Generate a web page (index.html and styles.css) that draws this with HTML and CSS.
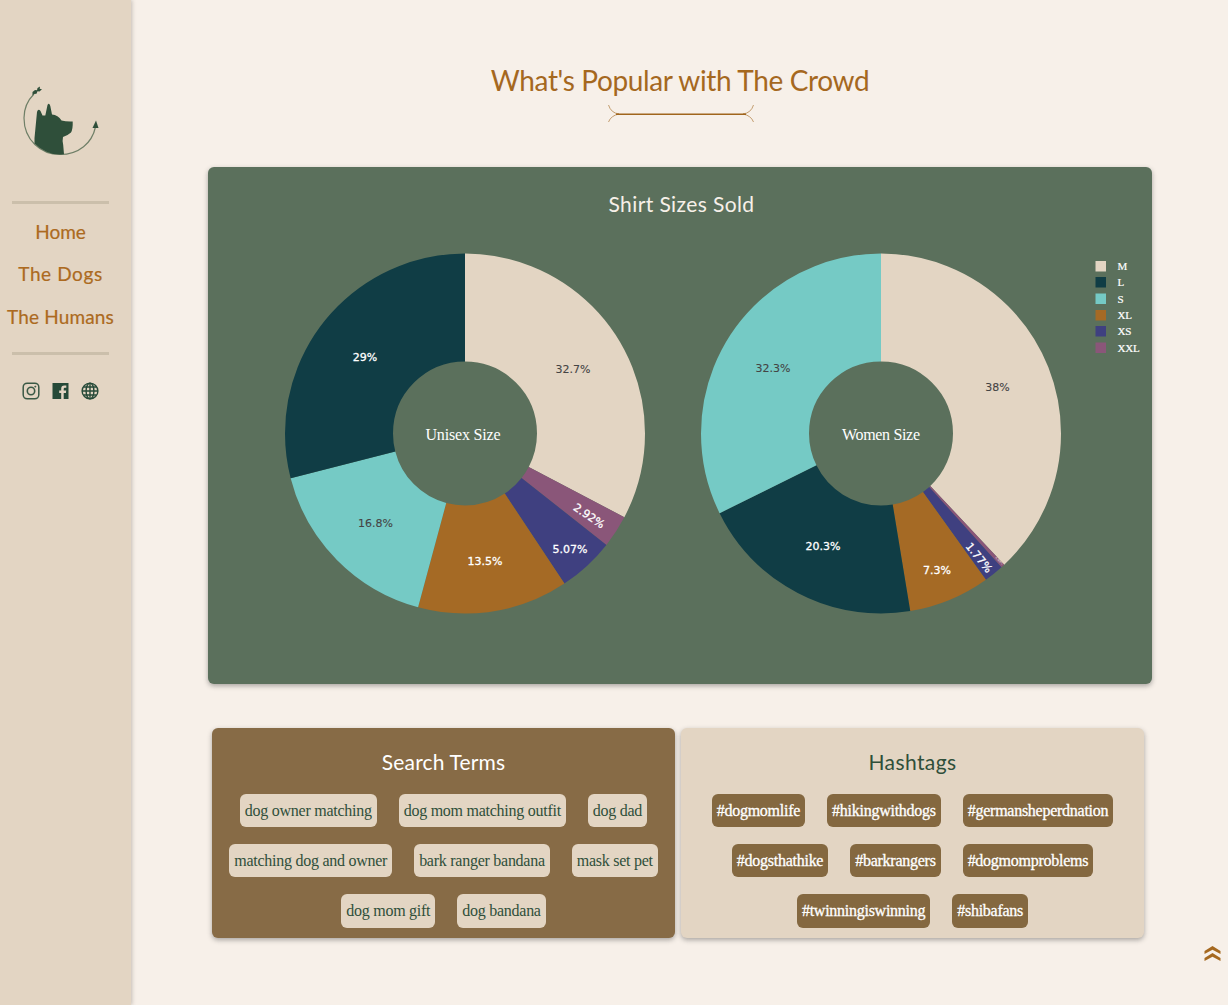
FILE: index.html
```html
<!DOCTYPE html>
<html lang="en">
<head>
<meta charset="utf-8">
<title>What's Popular with The Crowd</title>
<link rel="stylesheet" href="styles.css">
</head>
<body>
<aside class="sidebar">
  <svg class="logo" width="84" height="80" viewBox="18 80 84 80" role="img" aria-label="Dog logo">
    <path d="M34 94C27 101 24 109 24 118C24 140 41 154.500 60 154.500C79 154.500 92 143 95.500 127" fill="none" stroke="#6f7f67" stroke-width="1.200"/>
    <path d="M34.500 143.500V138L37 112Q38.200 108 40.500 111L42.500 115.500H45.300L47.500 105Q49 102 50.300 106L52 114.500Q58 115 61.500 120.500Q66 121.800 72.700 121.500Q73 129 71 132.500Q67 136 63 137Q62.200 140 63.200 145L64 154.300Q54 155.500 46 151.500Q39.500 148.500 34.500 143.500Z" fill="#2f4f3a"/>
    <path d="M96 120.500L98.500 128H92.500Z" fill="#2f4f3a"/>
    <path d="M32.500 95.500L32.500 92L35 90L37 90.300L37.500 88L40 86.500L39.700 88.800L42 89.200L39.500 91.500L37.500 91.300L36.500 93.800L34 94Z" fill="#2f4f3a"/>
  </svg>
  <nav class="nav">
    <a class="nav-link nav-home">Home</a>
    <a class="nav-link nav-dogs">The Dogs</a>
    <a class="nav-link nav-humans">The Humans</a>
  </nav>
  <div class="socials">
    <svg width="18" height="18" viewBox="0 0 18 18" fill="none" stroke="#3a5945"><rect x="1.200" y="1.200" width="15.600" height="15.600" rx="4" stroke-width="1.500"/><circle cx="9" cy="9" r="3.700" stroke-width="1.600"/><circle cx="13.300" cy="4.600" r=".7" fill="#2f4f3a" stroke-width=".5"/></svg>
    <svg width="18" height="18" viewBox="0 0 18 18"><path fill="#264a38" d="M.5 1H16.500V17H11.700V11H13.900L14.200 8.500H11.700V6.900Q11.700 5.700 12.800 5.700H14.300V3.400H12.300Q9.200 3.400 9.200 6.700V8.500H7.200V11H9.200V17H.5Z"/></svg>
    <svg width="18" height="18" viewBox="0 0 18 18" fill="none" stroke="#264a38" stroke-width="1.400"><circle cx="9" cy="9" r="7.900"/><ellipse cx="9" cy="9" rx="3.900" ry="7.900"/><path d="M9 1V17M1 9H17M2.500 5H15.500M2.500 13H15.500"/></svg>
  </div>
</aside>
<main class="main">
  <header class="page-head">
    <h1 class="page-title">What's Popular with The Crowd</h1>
    <svg class="flourish" width="148" height="20" viewBox="0 0 148 20" fill="none" stroke="#a0651d"><path d="M9 10.200H139" stroke-width="1.500"/><path d="M1.500 1Q4 9 12 10Q4 11.500 1.500 18M146.500 1Q144 9 136 10Q144 11.500 146.500 18" stroke-width=".6"/></svg>
  </header>
  <section class="card chart-card">
    <h2 class="card-title chart-title">Shirt Sizes Sold</h2>
    <svg class="chart" width="944" height="400" viewBox="208 234 944 400">
      <g class="ring" transform="rotate(-90 465 433.500)">
        <circle class="c-m" cx="465" cy="433.500" r="126" pathLength="100" stroke-dasharray="32.700 67.300"/>
        <circle class="c-xxl" cx="465" cy="433.500" r="126" pathLength="100" stroke-dasharray="2.920 97.080" stroke-dashoffset="-32.700"/>
        <circle class="c-xs" cx="465" cy="433.500" r="126" pathLength="100" stroke-dasharray="5.070 94.930" stroke-dashoffset="-35.620"/>
        <circle class="c-xl" cx="465" cy="433.500" r="126" pathLength="100" stroke-dasharray="13.510 86.490" stroke-dashoffset="-40.690"/>
        <circle class="c-s" cx="465" cy="433.500" r="126" pathLength="100" stroke-dasharray="16.800 83.200" stroke-dashoffset="-54.200"/>
        <circle class="c-l" cx="465" cy="433.500" r="126" pathLength="100" stroke-dasharray="29 71" stroke-dashoffset="-71"/>
      </g>
      <g class="ring" transform="rotate(-90 881 433.500)">
        <circle class="c-m" cx="881" cy="433.500" r="126" pathLength="100" stroke-dasharray="38 62"/>
        <circle class="c-xxl" cx="881" cy="433.500" r="126" pathLength="100" stroke-dasharray=".33 99.670" stroke-dashoffset="-38"/>
        <circle class="c-xs" cx="881" cy="433.500" r="126" pathLength="100" stroke-dasharray="1.770 98.230" stroke-dashoffset="-38.330"/>
        <circle class="c-xl" cx="881" cy="433.500" r="126" pathLength="100" stroke-dasharray="7.300 92.700" stroke-dashoffset="-40.100"/>
        <circle class="c-l" cx="881" cy="433.500" r="126" pathLength="100" stroke-dasharray="20.300 79.700" stroke-dashoffset="-47.400"/>
        <circle class="c-s" cx="881" cy="433.500" r="126" pathLength="100" stroke-dasharray="32.300 67.700" stroke-dashoffset="-67.700"/>
      </g>
      <g class="pct">
        <text class="dark" x="573" y="373">32.7%</text>
        <text class="dark" x="375.500" y="527">16.8%</text>
        <text class="dark" x="773" y="372">32.3%</text>
        <text class="dark" x="997.500" y="391">38%</text>
        <text x="365" y="360.500">29%</text>
        <text x="485" y="564.500">13.5%</text>
        <text x="570" y="553">5.07%</text>
        <text transform="translate(587 519) rotate(34)">2.92%</text>
        <text x="823" y="550">20.3%</text>
        <text x="937" y="573.500">7.3%</text>
        <text transform="translate(976 560) rotate(51)">1.77%</text>
        <text class="tiny" transform="translate(998.500 561.200) rotate(47)">0.328%</text>
      </g>
      <g class="center-label">
        <text x="463" y="439.500" textLength="75">Unisex Size</text>
        <text x="881" y="439.500" textLength="78">Women Size</text>
      </g>
      <g class="legend">
        <path fill="#e3d5c3" d="M1095.500 261h10.500v10.500h-10.500z"/><text x="1117.500" y="270">M</text>
        <path fill="#103d45" d="M1095.500 277h10.500v10.500h-10.500z"/><text x="1117.500" y="286">L</text>
        <path fill="#75cac5" d="M1095.500 293.500h10.500v10.500h-10.500z"/><text x="1117.500" y="303">S</text>
        <path fill="#a56a25" d="M1095.500 310h10.500v10.500h-10.500z"/><text x="1117.500" y="319">XL</text>
        <path fill="#3f4080" d="M1095.500 326h10.500v10.500h-10.500z"/><text x="1117.500" y="335">XS</text>
        <path fill="#8a5679" d="M1095.500 342.500h10.500v10.500h-10.500z"/><text x="1117.500" y="352">XXL</text>
      </g>
    </svg>
  </section>
  <div class="panels">
    <section class="card panel terms">
      <h2 class="card-title terms-title">Search Terms</h2>
      <div class="tags"><span class="tag">dog owner matching</span><span class="tag">dog mom matching outfit</span><span class="tag">dog dad</span></div>
      <div class="tags"><span class="tag">matching dog and owner</span><span class="tag">bark ranger bandana</span><span class="tag">mask set pet</span></div>
      <div class="tags"><span class="tag">dog mom gift</span><span class="tag">dog bandana</span></div>
    </section>
    <section class="card panel hashtags">
      <h2 class="card-title hashtags-title">Hashtags</h2>
      <div class="tags"><span class="tag">#dogmomlife</span><span class="tag">#hikingwithdogs</span><span class="tag">#germansheperdnation</span></div>
      <div class="tags"><span class="tag">#dogsthathike</span><span class="tag">#barkrangers</span><span class="tag">#dogmomproblems</span></div>
      <div class="tags"><span class="tag">#twinningiswinning</span><span class="tag">#shibafans</span></div>
    </section>
  </div>
</main>
<a class="to-top" aria-label="Back to top"><svg width="18" height="17" viewBox="0 0 18 17" fill="#a5681f"><path d="M.5 6L8.500 1L16.500 6V9L8.500 4.700L.5 9ZM.5 13L8.500 8L16.500 13V16L8.500 11.700L.5 16Z"/></svg></a>
</body>
</html>
```
FILE: styles.css
```css
* { box-sizing: border-box; }
body {
  margin: 0;
  display: flex;
  height: 1005px;
  overflow: hidden;
  background: #f7f0e9;
  font-family: "Liberation Serif", "Times New Roman", serif;
}
h1, h2 { margin: 0; font-weight: 400; }
svg { display: block; }

.sidebar {
  flex: 0 0 131px;
  background: #e3d5c3;
  box-shadow: 1px 0 4px rgba(80, 70, 60, .3);
  padding-top: 80px;
}
.logo { margin-left: 18px; }
.nav {
  width: 97px;
  height: 154px;
  margin: 41px 0 0 12px;
  border-top: 3px solid #cbbfab;
  border-bottom: 3px solid #cbbfab;
  display: flex;
  flex-direction: column;
  align-items: center;
  padding-top: 7px;
}
.nav-link, .page-title, .card-title {
  font-family: Papyrus, Lato, sans-serif;
  white-space: nowrap;
}
.nav-link { font-size: 19px; line-height: 42.300px; color: #ac6a20; -webkit-text-stroke: .2px; }
.nav-dogs { letter-spacing: .6px; }
.nav-humans { letter-spacing: .15px; }
.socials { display: flex; gap: 11.500px; margin: 27px 0 0 22px; }

.main { flex: 1; padding: 60px 76px 0 77px; }
.page-head { height: 106.500px; display: flex; flex-direction: column; align-items: center; }
.page-title { font-size: 28px; line-height: 40px; letter-spacing: -.36px; color: #a5681f; }
.flourish { margin: 4px 0 0 2px; }

.card { border-radius: 6px; box-shadow: 0 2px 5px rgba(50, 50, 50, .4); }
.card-title { text-align: center; font-size: 21px; }
.chart-card { height: 517.500px; background: #5b705c; color: #f7f0e9; }
.chart-title { height: 67.500px; line-height: 73px; letter-spacing: .4px; padding-left: 3px; }
.ring { fill: none; stroke-width: 108; }
.c-m { stroke: #e3d5c3; }
.c-l { stroke: #103d45; }
.c-s { stroke: #75cac5; }
.c-xl { stroke: #a56a25; }
.c-xs { stroke: #3f4080; }
.c-xxl { stroke: #8a5679; }
.pct { font: 11px "DejaVu Sans", sans-serif; fill: #fff; stroke: #fff; stroke-width: .3px; text-anchor: middle; }
.pct .dark { fill: #444; stroke: #444; stroke-width: .1px; }
.pct .tiny { font-size: 2.500px; stroke: none; }
.center-label { font-size: 16px; fill: #fff; text-anchor: middle; }
.legend { font-size: 11px; }
.legend text { fill: #fff; stroke: #fff; stroke-width: .2px; letter-spacing: -.2px; }

.panels { display: flex; gap: 6px; margin: 44px 7px 0 4px; }
.panel { height: 210px; flex: 0 0 463px; }
.terms { background: #876b46; color: #fff; }
.hashtags { background: #e3d5c3; color: #2f4f3a; }
.panel .card-title { height: 66px; line-height: 68px; }
.terms-title { letter-spacing: .15px; }
.hashtags-title { letter-spacing: .4px; }
.tags { display: flex; justify-content: center; gap: 22px; margin-bottom: 17px; }
.tag {
  height: 33.200px;
  padding: 0 5px;
  line-height: 33px;
  border-radius: 6px;
  font-size: 16px;
  letter-spacing: -.26px;
  white-space: nowrap;
  background: #e3d5c3;
  color: #2f4f3a;
}
.hashtags .tag { background: #846840; color: #fff; -webkit-text-stroke: .3px; }

.to-top { position: fixed; left: 1204px; top: 945px; }
```
